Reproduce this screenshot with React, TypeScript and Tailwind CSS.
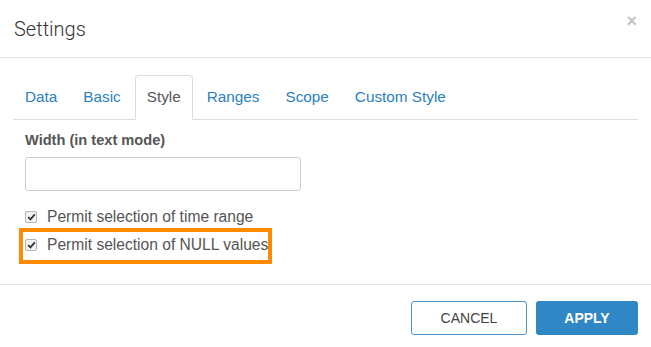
import React from "react";

const tabs = ["Data", "Basic", "Style", "Ranges", "Scope", "Custom Style"];

function Check() {
  return (
    <span className="flex h-[12px] w-[12px] items-center justify-center rounded-[2px] border border-[#b5b5b5] bg-[#f3f3f3]">
      <svg width="9" height="8" viewBox="0 0 9 8">
        <path d="M1.2 4.2 L3.4 6.4 L7.8 1.4" fill="none" stroke="#333" strokeWidth="1.8" />
      </svg>
    </span>
  );
}

export default function App() {
  return (
    <div
      className="relative h-[347px] w-[651px] bg-white text-[#555]"
      style={{ fontFamily: "'Liberation Sans', Arial, sans-serif" }}
    >
      <div className="flex h-[58px] items-center justify-between border-b border-[#e5e5e5] pl-[14px] pr-[14px]">
        <span className="text-[20px] font-light text-[#333]" style={{ fontFamily: "Roboto, sans-serif" }}>
          Settings
        </span>
        <span className="mb-[16px] text-[18px] font-bold leading-none text-[#c4c4c4]">×</span>
      </div>
      <div className="px-[13px] pt-[17px]">
        <div className="flex h-[45px] items-end border-b border-[#dddddd]">
          {tabs.map((t) =>
            t === "Style" ? (
              <div
                key={t}
                className="-mb-px mr-[2px] flex h-[45px] items-center rounded-t-[4px] border border-b-white border-[#dddddd] bg-white px-[11px] text-[15.3px] text-[#555]"
              >
                {t}
              </div>
            ) : (
              <div key={t} className="mr-[2px] flex h-[44px] items-center px-[12px] text-[15.3px] text-[#2a7fc1]">
                {t}
              </div>
            )
          )}
        </div>
        <div className="pl-[12px] pt-[10px]">
          <div className="text-[14.6px] font-bold leading-[20px] text-[#555]">Width (in text mode)</div>
          <div className="mt-[7px] h-[34px] w-[276px] rounded-[3px] border border-[#cccccc] bg-white" />
          <div className="mt-[17px] flex items-center gap-[10px] text-[15.6px] leading-[18px]">
            <Check />
            <span>Permit selection of time range</span>
          </div>
          <div className="relative mt-[10px] flex items-center gap-[10px] text-[15.6px] leading-[18px]">
            <Check />
            <span>Permit selection of NULL values</span>
            <div className="absolute left-[-6px] top-[-8px] h-[36px] w-[253px] border-[4px] border-[#ff8a00]" />
          </div>
        </div>
      </div>
      <div className="absolute bottom-0 left-0 right-0 flex h-[63px] items-start justify-end gap-[9px] border-t border-[#e5e5e5] pr-[13px] pt-[16px]">
        <button className="h-[34px] w-[116px] rounded-[3px] border border-[#4a93cc] bg-white text-[14px] text-[#444]">
          CANCEL
        </button>
        <button className="h-[34px] w-[102px] rounded-[3px] bg-[#2f87c5] text-[14px] font-bold text-white">
          APPLY
        </button>
      </div>
    </div>
  );
}
